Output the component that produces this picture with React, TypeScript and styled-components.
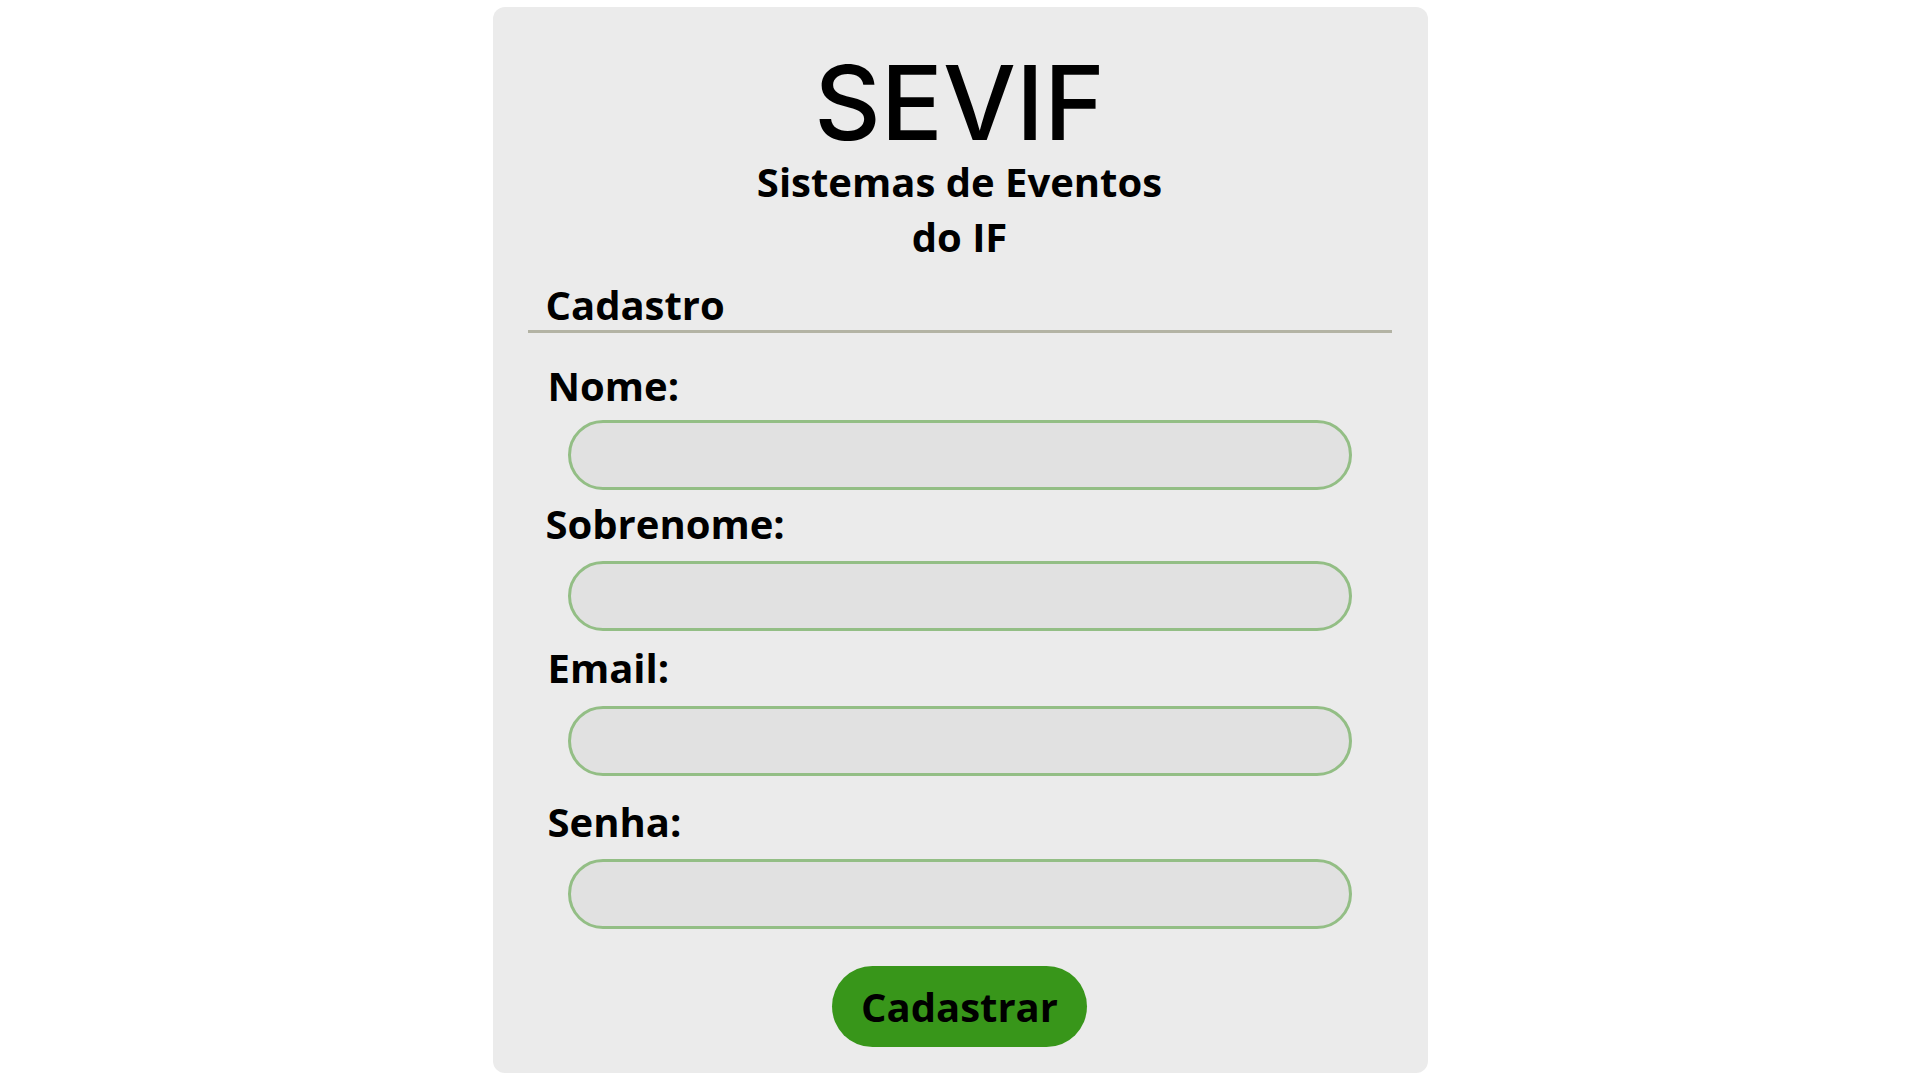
import React from 'react';
import styled, { createGlobalStyle } from 'styled-components';

const GlobalStyle = createGlobalStyle`
  body {
    margin: 0;
    background: #ffffff;
    font-family: 'Open Sans', 'Noto Sans', sans-serif;
  }
`;

const Page = styled.main`
  display: flex;
  justify-content: center;
  padding-top: 7px;
`;

const Card = styled.form`
  width: 935px;
  box-sizing: border-box;
  background: #ebebeb;
  border-radius: 12px;
  padding: 44px 36px 26px 35px;
  display: flex;
  flex-direction: column;
`;

const Title = styled.h1`
  margin: 0;
  font-family: 'Inter', 'Liberation Sans', sans-serif;
  font-weight: 500;
  font-size: 103px;
  line-height: 1;
  text-align: center;
  color: #000;
`;

const Subtitle = styled.h2`
  margin: 0 auto;
  max-width: 440px;
  font-size: 40px;
  font-weight: 700;
  line-height: 55px;
  text-align: center;
  color: #000;
`;

const SectionHeading = styled.h3`
  margin: 16px 0 0;
  padding-left: 18px;
  font-size: 40px;
  font-weight: 700;
  line-height: 50px;
  color: #000;
  border-bottom: 3px solid #b3b3a4;
`;

const Field = styled.div<{ $top: number }>`
  display: flex;
  flex-direction: column;
  margin-top: ${props => props.$top}px;
`;

const Label = styled.label<{ $indent: number }>`
  padding-left: ${props => props.$indent}px;
  font-size: 40px;
  font-weight: 700;
  color: #000;
`;

const Input = styled.input<{ $gap: number }>`
  align-self: center;
  width: 784px;
  height: 70px;
  box-sizing: border-box;
  margin-top: ${props => props.$gap}px;
  border: 3px solid #93be85;
  border-radius: 35px;
  background: #e1e1e1;
  padding: 0 28px;
  font-family: 'Open Sans', sans-serif;
  font-size: 28px;
  outline: none;
`;

const SubmitButton = styled.button`
  align-self: center;
  margin-top: 37px;
  height: 81px;
  padding: 0 29px;
  border: none;
  border-radius: 41px;
  background: #38961a;
  color: #000;
  font-family: 'Open Sans', sans-serif;
  font-size: 40px;
  font-weight: 700;
  cursor: pointer;
`;

const fields = [
  { id: 'nome', label: 'Nome:', type: 'text', top: 25, gap: 7, indent: 20 },
  { id: 'sobrenome', label: 'Sobrenome:', type: 'text', top: 6, gap: 10, indent: 18 },
  { id: 'email', label: 'Email:', type: 'email', top: 9, gap: 11, indent: 20 },
  { id: 'senha', label: 'Senha:', type: 'password', top: 18, gap: 10, indent: 20 },
];

export default function App() {
  return (
    <>
      <GlobalStyle />
      <Page>
        <Card onSubmit={e => e.preventDefault()}>
          <Title>SEVIF</Title>
          <Subtitle>Sistemas de Eventos do IF</Subtitle>
          <SectionHeading>Cadastro</SectionHeading>
          {fields.map(f => (
            <Field key={f.id} $top={f.top}>
              <Label htmlFor={f.id} $indent={f.indent}>{f.label}</Label>
              <Input id={f.id} name={f.id} type={f.type} $gap={f.gap} />
            </Field>
          ))}
          <SubmitButton type="submit">Cadastrar</SubmitButton>
        </Card>
      </Page>
    </>
  );
}
